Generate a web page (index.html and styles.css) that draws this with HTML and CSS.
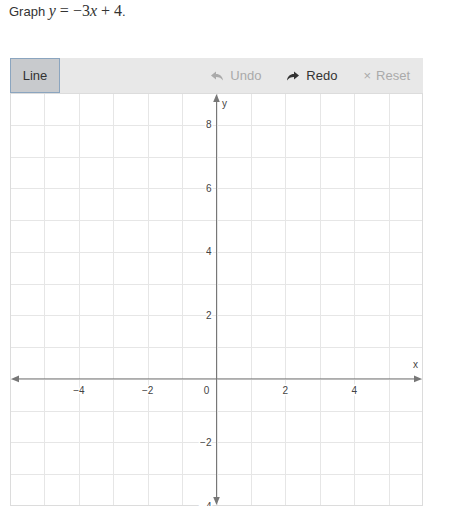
FILE: index.html
```html
<!DOCTYPE html>
<html lang="en">
<head>
    <meta charset="UTF-8">
    <title>graph line</title>
    <link rel="stylesheet" href="styles.css">
</head>
<body>
    <p class="question">Graph <span class="math"><i>y</i><span class="op">=</span>−3<i>x</i><span class="op">+</span>4</span>.</p>

    <div class="widget">
        <div class="toolbar">
            <button class="tool active">Line</button>
            <div class="actions">
                <button class="act off">
                    <svg width="12" height="10" viewBox="0 0 12 10"><path d="M5 0.5 L0 4.5 L5 8.5 V6 C8.2 6 10.3 7 12 9.5 C11.6 5.6 9 3 5 3 Z" fill="currentColor"/></svg>
                    Undo
                </button>
                <button class="act">
                    <svg width="12" height="10" viewBox="0 0 12 10"><path d="M7 0.5 L12 4.5 L7 8.5 V6 C3.8 6 1.7 7 0 9.5 C0.4 5.6 3 3 7 3 Z" fill="currentColor"/></svg>
                    Redo
                </button>
                <button class="act off"><span class="x">×</span> Reset</button>
            </div>
        </div>

        <svg class="graph" width="413" height="413" viewBox="0 0 413 413">
            <g class="grid" id="grid"></g>
            <rect class="frame" x="0.5" y="0.5" width="412" height="412"/>
            <g class="axes">
                <line x1="6" y1="285.9" x2="407" y2="285.9"/>
                <line x1="206.5" y1="6" x2="206.5" y2="407"/>
                <polygon points="1,285.9 9,282.6 9,289.2"/>
                <polygon points="412,285.9 404,282.6 404,289.2"/>
                <polygon points="206.5,1 203.2,9 209.8,9"/>
                <polygon points="206.5,412 203.2,404 209.8,404"/>
            </g>
            <g class="labels" id="labels">
                <text x="212" y="14">y</text>
                <text x="403" y="275">x</text>
            </g>
        </svg>
    </div>

    <script>
        // grid is -6..6 on x and -4..9 on y
        const ux = 413 / 12;
        const uy = 413 / 13;
        const ox = 6 * ux;
        const oy = 9 * uy;
        const grid = document.getElementById("grid");
        const labels = document.getElementById("labels");
        const ns = "http://www.w3.org/2000/svg";

        function add(parent, tag, attrs, text) {
            const el = document.createElementNS(ns, tag);
            for (const k in attrs) el.setAttribute(k, attrs[k]);
            if (text) el.textContent = text;
            parent.appendChild(el);
        }

        for (let i = -6; i <= 6; i++) {
            const x = Math.round(ox + i * ux) + 0.5;
            add(grid, "line", { x1: x, y1: 0, x2: x, y2: 413 });
        }
        for (let j = -4; j <= 9; j++) {
            const y = Math.round(oy - j * uy) + 0.5;
            add(grid, "line", { x1: 0, y1: y, x2: 413, y2: y });
        }

        [-4, -2, 2, 4].forEach(n => {
            add(labels, "text", { x: ox + n * ux, y: oy + 15, "text-anchor": "middle" }, n < 0 ? "−" + (-n) : n);
        });
        add(labels, "text", { x: ox - 10, y: oy + 15, "text-anchor": "middle" }, "0");
        [-4, -2, 2, 4, 6, 8].forEach(n => {
            add(labels, "text", { x: ox - 5, y: oy - n * uy + 3.5, "text-anchor": "end" }, n < 0 ? "−" + (-n) : n);
        });
    </script>
</body>
</html>
```

FILE: styles.css
```css
body {
    margin: 0;
    padding: 2px 0 0 9px;
    font-family: "Liberation Sans", Arial, sans-serif;
    color: #333;
    background: #fff;
}
.question {
    margin: 0;
    font-size: 13px;
    line-height: 18px;
}
.math {
    font-family: "Liberation Serif", "DejaVu Serif", serif;
    font-size: 16px;
}
.math i {
    font-style: italic;
}
.math .op {
    margin: 0 4px;
}
.widget {
    width: 413px;
    margin: 37px 0 0 1px;
}
.toolbar {
    display: flex;
    align-items: stretch;
    height: 35px;
    background: #e8e8e8;
}
.tool {
    width: 50px;
    border: 1px solid #8ba5bf;
    background: #c8cacd;
    color: #333;
    font-family: inherit;
    font-size: 13px;
    padding: 0;
}
.actions {
    display: flex;
    margin-left: auto;
}
.act {
    display: flex;
    align-items: center;
    gap: 7px;
    border: none;
    background: none;
    padding: 0 13px;
    font-family: inherit;
    font-size: 13px;
    color: #333;
}
.act.off {
    color: #aaa;
}
.act .x {
    font-size: 13px;
    margin-right: -2px;
}
.graph {
    display: block;
}
.grid line {
    stroke: #e6e6e6;
    stroke-width: 1;
}
.frame {
    fill: none;
    stroke: #dcdcdc;
}
.axes line {
    stroke: #777;
    stroke-width: 1;
}
.axes polygon {
    fill: #777;
}
.labels text {
    font-family: "Liberation Sans", Arial, sans-serif;
    font-size: 10px;
    fill: #444;
    paint-order: stroke;
    stroke: #fff;
    stroke-width: 3px;
}
```
